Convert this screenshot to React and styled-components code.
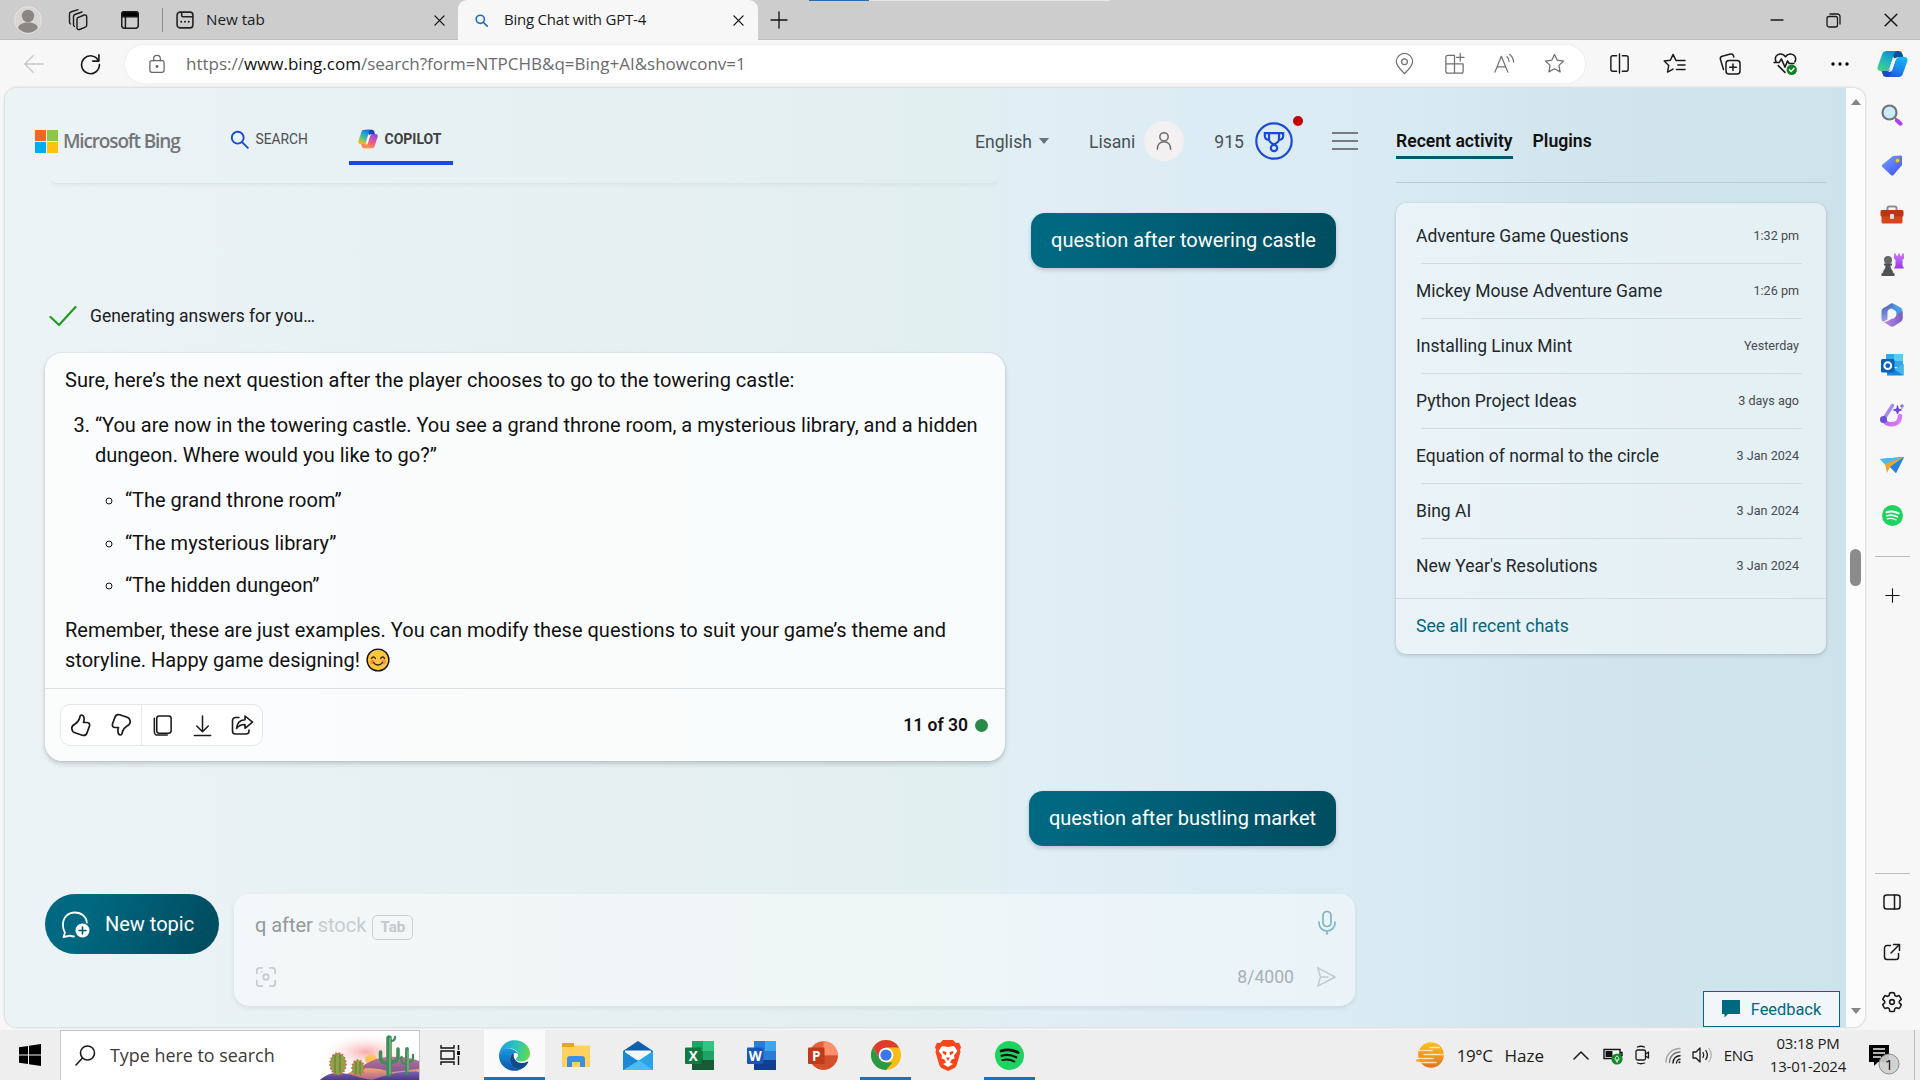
import React from "react";
import styled, { createGlobalStyle, css } from "styled-components";

const UI = `"Open Sans", "Noto Sans", sans-serif`;
const WEB = `Roboto, "Liberation Sans", sans-serif`;

const GlobalStyle = createGlobalStyle`
  * { box-sizing: border-box; }
  html, body { margin: 0; padding: 0; overflow: hidden; }
  body { font-family: ${WEB}; background: #f7f7f7; }
  ul, ol, p { margin: 0; padding: 0; }
  svg { display: block; flex: none; }
`;

const Screen = styled.div`
  width: 1920px;
  height: 1080px;
  display: flex;
  flex-direction: column;
  background: #f7f7f7;
  overflow: hidden;
`;

const Text = styled.span`
  font-family: ${(p) => (p.$ui ? UI : WEB)};
  font-size: ${(p) => p.$size}px;
  font-weight: ${(p) => p.$weight || 400};
  color: ${(p) => p.$color || "#1b1b1b"};
  letter-spacing: ${(p) => p.$ls || 0}px;
  white-space: nowrap;
`;

const Slot = styled.div`
  width: ${(p) => p.$w}px;
  height: 100%;
  flex: none;
  display: flex;
  align-items: center;
  justify-content: center;
`;

/* ---------- window chrome ---------- */

const TabStrip = styled.header`
  position: relative;
  height: 40px;
  flex: none;
  display: flex;
  align-items: center;
  background: #cdcdcd;
  box-shadow: inset 0 -1px 0 #bdbdbd;
`;

const LoadStrip = styled.div`
  position: absolute;
  top: 0;
  left: 809px;
  width: 301px;
  height: 1px;
  background: linear-gradient(90deg, #2a6cab 0 60px, #e8e8e8 60px);
`;

const StripDivider = styled.div`
  width: 1px;
  height: 24px;
  margin: 0 12px 0 2px;
  background: #8c8c8c;
`;

const Tab = styled.div`
  height: 40px;
  width: ${(p) => p.$w}px;
  display: flex;
  align-items: center;
  padding: 0 ${(p) => (p.$active ? "14px 0 17px" : "13px 0 0")};
  border-radius: 9px 9px 0 0;
  background: ${(p) => (p.$active ? "#f7f7f7" : "transparent")};
`;

const TabTitle = styled(Text)`
  flex: 1;
  margin-left: ${(p) => p.$gap}px;
  padding-bottom: 2px;
`;

const WindowButtons = styled.div`
  height: 100%;
  margin-left: auto;
  display: flex;
`;

const Toolbar = styled.div`
  height: 47px;
  flex: none;
  display: flex;
  align-items: center;
`;

const AddressBar = styled.div`
  width: 1460px;
  height: 38px;
  display: flex;
  align-items: center;
  padding-left: 16px;
  border-radius: 19px;
  background: #fff;
  box-shadow: 0 0 3px rgba(0, 0, 0, 0.08);
`;

const Url = styled.div`
  flex: 1;
  margin-left: 13px;
  white-space: nowrap;
`;

/* ---------- page frame ---------- */

const Body = styled.div`
  height: 943px;
  flex: none;
  display: flex;
  padding: 1px 0 3px 5px;
`;

const Frame = styled.main`
  width: 1860px;
  height: 939px;
  display: flex;
  overflow: hidden;
  border-radius: 12px;
  box-shadow: 0 0 3px rgba(0, 0, 0, 0.25);
`;

const Page = styled.div`
  position: relative;
  width: 1841px;
  display: flex;
  background: linear-gradient(90deg, #ecf3f7 0, #e8f1f3 300px, #e6f0f1 650px, #e2efef 930px, #e0eef5 1010px, #daebf3 1340px, #d3e6ee 1540px, #cee2ea 1841px);
`;

const ScrollTrack = styled.div`
  flex: 1;
  display: flex;
  flex-direction: column;
  align-items: center;
  background: #fcfcfc;
`;

const Arrow = styled.div`
  border: 5.5px solid transparent;
  ${(p) =>
    p.$up
      ? css`border-bottom: 6px solid #858585; border-top: 0; margin-top: 11px;`
      : css`border-top: 6px solid #858585; border-bottom: 0; margin: auto 0 13px;`}
`;

const Thumb = styled.div`
  width: 11px;
  height: 37px;
  margin-top: 444px;
  border-radius: 6px;
  background: #8b8b8b;
`;

const Side = styled.aside`
  width: 54px;
  display: flex;
  flex-direction: column;
  align-items: center;
  padding-top: 2px;
`;

const SideItem = styled.div`
  height: 50px;
  display: flex;
  align-items: center;
  justify-content: center;
`;

const SideRule = styled.hr`
  width: 35px;
  height: 1px;
  border: 0;
  margin: ${(p) => p.$m};
  background: #bdbdbd;
`;

/* ---------- conversation ---------- */

const Main = styled.section`
  width: 1391px;
  display: flex;
  flex-direction: column;
`;

const Header = styled.div`
  height: 94px;
  flex: none;
  display: flex;
  align-items: center;
  padding: 12px 38px 0 30px;
`;

const NavItem = styled.div`
  height: 82px;
  width: ${(p) => p.$w}px;
  display: flex;
  align-items: center;
  gap: 7px;
  padding: 0 0 4px ${(p) => p.$pad || 0}px;
  background: ${(p) =>
    p.$active ? "linear-gradient(#174ae4, #174ae4) 0 61px / 104px 4px no-repeat" : "none"};
`;

const Account = styled.div`
  margin-left: auto;
  display: flex;
  align-items: center;
`;

const AccountText = styled(Text)`
  padding-top: 2px;
`;

const Avatar = styled.div`
  width: 40px;
  height: 40px;
  margin-left: 9px;
  display: flex;
  align-items: center;
  justify-content: center;
  border-radius: 50%;
  background: #f2f0f0;
`;

const Rewards = styled.div`
  position: relative;
  margin-left: 11px;
`;

const RedDot = styled.i`
  position: absolute;
  top: -6px;
  right: -10px;
  width: 10px;
  height: 10px;
  border-radius: 50%;
  background: #c50006;
`;

const Burger = styled.div`
  width: 26px;
  height: 18px;
  margin-left: 39px;
  border: solid #767b80;
  border-width: 2px 0;
  display: flex;
  align-items: center;
  &::before { content: ""; width: 100%; height: 2px; background: #767b80; }
`;

const PreviousEdge = styled.div`
  width: 950px;
  height: 8px;
  margin: -6px 0 0 44px;
  border-radius: 0 0 10px 10px;
  border-bottom: 1px solid #dae5e7;
  box-shadow: 0 3px 4px -2px rgba(0, 0, 0, 0.05);
`;

const Bubble = styled.div`
  align-self: flex-end;
  width: ${(p) => p.$w}px;
  height: 55px;
  margin: ${(p) => p.$top}px 60px 0 0;
  padding-bottom: 2px;
  display: flex;
  align-items: center;
  justify-content: center;
  border-radius: 14px;
  background: linear-gradient(115deg, #006880 15%, #004e62 90%);
  box-shadow: 0 2px 4px rgba(0, 0, 0, 0.18);
`;

const Status = styled.div`
  height: 22px;
  display: flex;
  align-items: center;
  gap: 13px;
  margin: 37px 0 0 44px;
`;

const Answer = styled.article`
  width: 960px;
  height: 408px;
  flex: none;
  margin: 26px 0 0 40px;
  display: flex;
  flex-direction: column;
  border-radius: 17px;
  background: rgba(255, 255, 255, 0.78);
  box-shadow: 0 0 2px rgba(0, 0, 0, 0.14), 0 3px 5px rgba(0, 0, 0, 0.17);
`;

const Prose = styled.div`
  height: 335px;
  padding: 12px 20px 0;
  font-size: 20px;
  line-height: 30px;
  color: #111;
  white-space: nowrap;
`;

const Numbered = styled.ol`
  margin: 15px 0 15px;
  padding-left: 30px;
`;

const Choices = styled.ul`
  list-style: circle;
  margin-top: 15px;
  padding-left: 30px;
  li + li { margin-top: 12.7px; }
`;

const InlineEmoji = styled.span`
  display: inline-block;
  vertical-align: -5px;
  margin-left: 1px;
`;

const AnswerFoot = styled.div`
  flex: 1;
  display: flex;
  align-items: center;
  padding: 0 17px 0 15px;
  border-top: 1px solid #dadfe1;
`;

const Actions = styled.div`
  height: 42px;
  display: flex;
  align-items: center;
  border: 1px solid #e4e6e8;
  border-radius: 10px;
  background: #fff;
`;

const ActionSep = styled.div`
  width: 1px;
  height: 100%;
  background: #e4e6e8;
`;

const Counter = styled.div`
  margin-left: auto;
  display: flex;
  align-items: center;
  gap: 7px;
  &::after { content: ""; width: 13px; height: 13px; border-radius: 50%; background: #2b8a47; }
`;

const Composer = styled.div`
  display: flex;
  gap: 15px;
  margin: 48px 0 0 40px;
`;

const NewTopic = styled.button`
  width: 174px;
  height: 60px;
  display: flex;
  align-items: center;
  gap: 15px;
  padding: 0 0 0 16px;
  border: 0;
  border-radius: 30px;
  background: linear-gradient(115deg, #006880 25%, #004e62 88%);
`;

const InputBox = styled.div`
  width: 1121px;
  height: 112px;
  display: flex;
  flex-direction: column;
  justify-content: space-between;
  padding: 16px 18px 18px 21px;
  border-radius: 15px;
  background: rgba(255, 255, 255, 0.42);
  box-shadow: 0 2px 5px rgba(0, 0, 0, 0.08);
`;

const InputLine = styled.div`
  height: ${(p) => p.$h}px;
  display: flex;
  align-items: center;
  gap: ${(p) => p.$gap || 0}px;
`;

const Push = styled.div`
  margin-left: auto;
`;

const MicButton = styled.div`
  margin: -5px 0 0 auto;
`;

const TabKey = styled.kbd`
  width: 41px;
  height: 25px;
  margin-top: 5px;
  display: flex;
  align-items: center;
  justify-content: center;
  border: 1.5px solid #c9d0d1;
  border-radius: 5px;
  font: 700 15px ${WEB};
  color: #c3cacb;
`;

/* ---------- recent activity ---------- */

const Panel = styled.section`
  width: 430px;
  display: flex;
  flex-direction: column;
`;

const PanelTabs = styled.div`
  height: 95px;
  display: flex;
  gap: 20px;
  padding-top: 40px;
  border-bottom: 1px solid #b6cbd3;
`;

const PanelTab = styled.div`
  height: 31px;
  padding-top: 3px;
  border-bottom: ${(p) => (p.$active ? "3px solid #005a70" : "0")};
`;

const ActivityCard = styled.div`
  height: 451px;
  margin-top: 20px;
  border-radius: 10px;
  background: rgba(255, 255, 255, 0.45);
  box-shadow: 0 0 2px rgba(0, 0, 0, 0.12), 0 2px 4px rgba(0, 0, 0, 0.13);
`;

const ActivityList = styled.div`
  height: 396px;
  padding: 6px 24px 0 20px;
  border-bottom: 1px solid #cfdce1;
`;

const ActivityRow = styled.div`
  height: 55px;
  display: flex;
  align-items: center;
  justify-content: space-between;
  padding: 0 3px 2px 0;
  background: ${(p) => (p.$last ? "none" : "linear-gradient(#cfdde3, #cfdde3) 5px 100% / 100% 1px no-repeat")};
`;

const SeeAll = styled.div`
  height: 55px;
  display: flex;
  align-items: center;
  padding: 0 0 1px 20px;
`;

const Feedback = styled.button`
  position: absolute;
  right: 6px;
  bottom: 0;
  width: 137px;
  height: 36px;
  display: flex;
  align-items: center;
  justify-content: center;
  gap: 11px;
  padding: 0;
  border: 1px solid #00687f;
  background: #f1f6f9;
`;

/* ---------- taskbar ---------- */

const Taskbar = styled.footer`
  height: 50px;
  flex: none;
  display: flex;
  align-items: center;
  background: #eeeeee;
`;

const SearchBox = styled.div`
  width: 360px;
  height: 50px;
  display: flex;
  align-items: center;
  padding-left: 14px;
  gap: 14px;
  border: 1px solid #c4c4c4;
  border-bottom: 0;
  background: #fff;
  overflow: hidden;
`;

const SearchHint = styled(Text)`
  padding-bottom: 2px;
`;

const AppTile = styled.div`
  width: ${(p) => p.$w}px;
  height: 50px;
  display: flex;
  align-items: center;
  justify-content: center;
  background: ${(p) => (p.$open ? "#fafafa" : "transparent")};
  box-shadow: ${(p) => (p.$running ? "inset 0 -3px 0 #0b75cf" : "none")};
`;

const Space = styled.div`
  width: ${(p) => p.$w}px;
  flex: none;
`;

const Clock = styled.div`
  width: 94px;
  display: flex;
  flex-direction: column;
  align-items: center;
`;

const ClockLine = styled(Text)`
  line-height: 23px;
`;

const ActionCenter = styled.div`
  margin: 8px 13px 0 14px;
`;

const PeekEdge = styled.div`
  width: 1px;
  height: 50px;
  background: #bcbcbc;
`;

/* ---------- drawings ---------- */

function Line({ w = 24, h, vb = "0 0 24 24", c = "#1a1a1a", sw = 1.5, fill = "none", children }) {
  return (
    <svg width={w} height={h || w} viewBox={vb} fill={fill} stroke={c} strokeWidth={sw} strokeLinecap="round" strokeLinejoin="round">
      {children}
    </svg>
  );
}

const Profile = () => (
  <svg width="28" height="28" viewBox="0 0 28 28">
    <circle cx="14" cy="14" r="13.3" fill="#d8d6d3" stroke="#e6e4e0" />
    <circle cx="14" cy="10" r="6.2" fill="#8a8782" />
    <path d="M4 22c1-4 5-5.500 10-5.500S23 18 24 22a13 13 0 0 1-20 0z" fill="#8a8782" />
  </svg>
);
const Workspaces = () => (
  <Line w={24} sw={1.4}>
    <path d="M12.500 9.300 18.200 7a1.800 1.800 0 0 1 2.500 1.700v8.600a2 2 0 0 1-1.300 1.900L13.500 21.500a1.800 1.800 0 0 1-2.500-1.700v-8.600a2 2 0 0 1 1.500-1.900z" />
    <path d="M8.500 18.500a2 2 0 0 1-1-1.700V8.300A2 2 0 0 1 8.800 6.500L16 4M4.500 16a2 2 0 0 1-1-1.700V5.800A2 2 0 0 1 4.800 4L12 1.700" />
  </Line>
);
const TabActions = () => (
  <Line w={22} sw={1.6}>
    <rect x="3" y="3" width="18" height="18" rx="3" />
    <path d="M3 6a3 3 0 0 1 3-3h12a3 3 0 0 1 3 3v2.500H3z" fill="#000" />
    <path d="M7 9v12" />
  </Line>
);
const NewTabIcon = () => (
  <Line w={20} sw={1.9} c="#222">
    <rect x="2.500" y="2.500" width="19" height="19" rx="3.500" />
    <path d="M8 3v3.500a1.500 1.500 0 0 0 1.500 1.500H21" />
    <path d="M7.500 14h.01M12 14h.01M16.500 14h.01" strokeWidth="2.400" />
  </Line>
);
const X = ({ s = 11, sw = 1.4 }) => (
  <Line w={s} vb="0 0 12 12" sw={sw} c="#111"><path d="M1 1l10 10M11 1 1 11" /></Line>
);
const Plus = ({ s = 18, c = "#111", sw = 1.3 }) => (
  <Line w={s} vb="0 0 18 18" sw={sw} c={c}><path d="M9 1v16M1 9h16" /></Line>
);
const Glass = ({ s = 16, c = "#1a6fc4", sw = 2 }) => (
  <Line w={s} vb="0 0 16 16" sw={sw} c={c}><circle cx="6.500" cy="6.500" r="5" /><path d="M10.200 10.200 15 15" /></Line>
);
const TaskGlass = () => (
  <Line w={21} vb="0 0 21 21" sw={1.6} c="#1b1b1b"><circle cx="12.500" cy="8" r="7" /><path d="M7.500 13 1 20" /></Line>
);
const Back = () => <Line w={22} c="#c8c8c8" sw={1.4}><path d="M22 12H2.500M11 3 2 12l9 9" /></Line>;
const Reload = () => (
  <Line w={23} sw={1.7}><path d="M20.500 9.500A9.300 9.300 0 1 0 21.300 13M20.800 3v6.500h-6.500" /></Line>
);
const Lock = () => (
  <Line w={20} c="#666"><rect x="3.500" y="8" width="17" height="14" rx="2.500" /><path d="M8 8V5.500a4 4 0 0 1 8 0V8" /><circle cx="12" cy="15" r="1" fill="#666" /></Line>
);
const Pin = () => (
  <Line w={23} c="#6f6f6f" sw={1.3}><path d="M12 22.500c4-3.800 8.500-7.800 8.500-12.500a8.500 8.500 0 0 0-17 0c0 4.700 4.500 8.700 8.500 12.500z" /><circle cx="12" cy="10.200" r="3" /></Line>
);
const Grid = () => (
  <Line w={23} c="#6f6f6f" sw={1.3}><path d="M12 3.500H5a2 2 0 0 0-2 2V20a2 2 0 0 0 2 2h14a2 2 0 0 0 2-2v-7.500H3M12 3.500V22M18 1.500v8M14 5.500h8" /></Line>
);
const ReadAloud = () => (
  <Line w={23} c="#6f6f6f" sw={1.3}><path d="M2 21 8.700 4.500 15.500 21M4.300 15.500h9M14.500 5c1.500 1.200 2.200 2.700 2.300 4.800M17.500 2.500c2.500 2 3.800 4.600 4 8" /></Line>
);
const starPath = "M12 2.500l2.900 6.100 6.600.8-4.900 4.600 1.300 6.700L12 17.400l-5.900 3.300 1.300-6.700L2.500 9.400l6.600-.8z";
const Star = () => <Line w={23} c="#6f6f6f" sw={1.3}><path d={starPath} /></Line>;
const Split = () => (
  <Line w={23}><path d="M9 4H5a2 2 0 0 0-2 2v12a2 2 0 0 0 2 2h4M15 4h4a2 2 0 0 1 2 2v12a2 2 0 0 1-2 2h-4M12 2v20" /></Line>
);
const Favorites = () => (
  <Line w={23}><path d="M16 8.800h-2.500L10.500 2.500 7.700 8.600 1.200 9.400 6 14l-1.300 7 5.800-3.200M14 8.800h9M15.500 13.500H23M14 18.200h9" /></Line>
);
const Collections = () => (
  <Line w={24}><rect x="8" y="8.500" width="14" height="13.500" rx="3" /><path d="M15 12v6.500M11.700 15.200h6.600M5.500 17.500 2.400 7.300a2.500 2.500 0 0 1 1.800-3L12.500 2a2.500 2.500 0 0 1 3 1.800l.3 1.200" /></Line>
);
const Heart = () => (
  <Line w={25}>
    <path d="M3 10.500C.8 6 4 2.800 7 2.800c2.200 0 3.800 1 5 2.700 1.200-1.700 2.800-2.700 5-2.700 3 0 6.200 3.200 4 7.700M1 11h5l2-3.500 3.500 8L14 9.500l1.500 2.500H20M5 14l6.500 6.500" />
    <circle cx="18" cy="18" r="5" fill="#128025" stroke="none" /><path d="M15.800 18l1.600 1.600 2.800-3" stroke="#fff" strokeWidth="1.300" />
  </Line>
);
const Dots = () => (
  <svg width="18" height="4" viewBox="0 0 18 4"><circle cx="2" cy="2" r="1.700" /><circle cx="9" cy="2" r="1.700" /><circle cx="16" cy="2" r="1.700" /></svg>
);

function CopilotMark({ s, h, warm }) {
  const id = warm ? "cw" : "cc";
  const a = warm ? ["#1a6fe0", "#2cb5c8", "#f5c400"] : ["#0f86d6", "#1fb2c0", "#45d08c"];
  const b = warm ? ["#8a50e8", "#f0588a", "#ff9a40"] : ["#1bb4f0", "#1a86f0", "#1560d8"];
  return (
    <svg width={s} height={h || s} viewBox="0 0 30 30" preserveAspectRatio="none">
      <defs>
        <linearGradient id={id + "a"} x1=".7" y1="0" x2=".2" y2="1"><stop offset="0" stopColor={a[0]} /><stop offset=".45" stopColor={a[1]} /><stop offset="1" stopColor={a[2]} /></linearGradient>
        <linearGradient id={id + "b"} x1=".6" y1="0" x2=".3" y2="1"><stop offset="0" stopColor={b[0]} /><stop offset=".55" stopColor={b[1]} /><stop offset="1" stopColor={b[2]} /></linearGradient>
      </defs>
      <path d="M13 1h8c2 0 3 1.200 3.500 3l1 3.500H21c-2 0-3.200 1-3.800 3z" fill={warm ? "#1645b8" : "#0c4f9c"} />
      <path d="M17 29H9c-2 0-3-1.200-3.500-3l-1-3.500H9c2 0 3.200-1 3.800-3z" fill={warm ? "#ff8a4c" : "#1a48c8"} />
      <path d="M9.500 1H20c-2 0-3 1.500-3.600 3.500L12 19.500c-.7 2.200-1.800 3-4 3H3.500C.8 22.500 0 20.500.6 18L5 4.500C5.800 2 7 1 9.500 1z" fill={`url(#${id}a)`} />
      <path d="M20.500 29H10c2 0 3-1.500 3.600-3.500L18 10.500c.7-2.200 1.800-3 4-3h4.500c2.700 0 3.500 2 2.900 4.500L25 25.500c-.8 2.500-2 3.500-4.500 3.500z" fill={`url(#${id}b)`} />
      <path d="M17 8.500h3c-1.500.8-2 1.700-2.500 3.400l-3 9.600c-.5 1.500-1.300 2-3 2h-1c1.300-.8 1.600-1.700 2-3l3-9.500c.3-1.200.7-2 1.500-2.500z" fill="#f4f8fb" opacity={warm ? 0.85 : 0.95} />
    </svg>
  );
}

const MsLogo = () => (
  <svg width="23" height="23" viewBox="0 0 23 23">
    <path fill="#f26522" d="M0 0h11v11H0z" /><path fill="#8dc63f" d="M12 0h11v11H12z" /><path fill="#00aeef" d="M0 12h11v11H0z" /><path fill="#ffc20e" d="M12 12h11v11H12z" />
  </svg>
);
const Trophy = () => (
  <svg width="38" height="38" viewBox="0 0 38 38" fill="none" stroke="#1b4bd6" strokeWidth="2.200">
    <circle cx="19" cy="19" r="17.700" />
    <path d="M14 11.200h10v6.300c0 2.200-2 3.500-5 5.200-3-1.700-5-3-5-5.200zM14 11.200H9.800v2.600c0 2.600 1.700 4 4.400 4.400M24 11.200h4.200v2.600c0 2.600-1.700 4-4.400 4.400" />
    <circle cx="19" cy="26" r="3.200" />
  </svg>
);
const Person = () => (
  <Line w={20} c="#6d6d6d" sw={1.8}><circle cx="12" cy="7" r="5" /><path d="M4 22c0-5.500 3.200-9 8-9s8 3.500 8 9" /></Line>
);
const Check = () => <Line w={28} h={22} vb="0 0 28 22" c="#1f9e22" sw={2.2}><path d="M1.500 12 10 20 26.500 2" /></Line>;
const Smile = () => (
  <svg width="24" height="24" viewBox="0 0 24 24">
    <circle cx="12" cy="12" r="10.900" fill="#fdc63c" stroke="#111" strokeWidth="1.400" />
    <circle cx="6.500" cy="14" r="2.300" fill="#f58a4c" /><circle cx="17.500" cy="14" r="2.300" fill="#f58a4c" />
    <path d="M5.500 10.500c.8-2 3-2 3.800 0M14.700 10.500c.8-2 3-2 3.800 0M7.500 14.500c2 3.300 7 3.300 9 0" fill="none" stroke="#3b2510" strokeWidth="1.400" strokeLinecap="round" />
  </svg>
);
const thumb = "M12.500 2c-.9 0-1.300.6-1.500 1.500-.5 3-2 5.500-5 7.500-2 1.200-3.500 2.500-3.200 4.500.2 2 .8 3.500 3 4.200l7.500 2.500c2.200.7 4-.3 4.700-2.300L20.500 13c.5-2-.5-3.500-2.500-3.500h-3.500C15.500 7 15.500 2 12.500 2z";
const ThumbUp = () => <Line w={24} c="#1a1a1a" sw={1.7}><path d={thumb} /></Line>;
const ThumbDown = () => <Line w={24} c="#1a1a1a" sw={1.7}><path d={thumb} transform="rotate(180 12 12)" /></Line>;
const Copy = () => (
  <Line w={23} sw={1.6}><rect x="6" y="2" width="15" height="18" rx="2.500" /><path d="M3.500 4.500v14A3.500 3.500 0 0 0 7 22h10" /></Line>
);
const Download = () => <Line w={23} sw={1.6}><path d="M12 2v16M6 12.500l6 6 6-6M3.500 22.500h17" /></Line>;
const Share = () => (
  <Line w={24} sw={1.6}><path d="M9 4.500H5.500a3 3 0 0 0-3 3V18a3 3 0 0 0 3 3H16a3 3 0 0 0 3-3v-1" /><path d="M15 3v3.800c-5 .3-8 3-8.500 8.700 2-3 4.500-4 8.500-4v3.800l7.500-6.200z" /></Line>
);
const TopicIcon = () => (
  <Line w={29} c="#fff" sw={1.8} vb="0 0 29 29">
    <path d="M13 26.500c-1.500 0-2.800-.3-4-.8L2.500 27l1.500-4.500C2.500 20.500 2 18 2 14 2 7.500 7 2.500 13.800 2.500S25.600 7 25.800 12.500" />
    <circle cx="21.500" cy="20.500" r="7" fill="#fff" stroke="none" /><path d="M21.500 17v7M18 20.500h7" stroke="#005a70" strokeWidth="1.600" />
  </Line>
);
const Lens = () => (
  <Line w={22} c="#c6cfd1" sw={2}>
    <path d="M2 8V5a3 3 0 0 1 3-3h3M16 2h3a3 3 0 0 1 3 3v3M22 16v3a3 3 0 0 1-3 3h-3M8 22H5a3 3 0 0 1-3-3v-3" /><circle cx="12" cy="12" r="3" /><path d="M7 6.500h.01" />
  </Line>
);
const Mic = () => (
  <Line w={20} h={25} vb="0 0 20 25" c="#80b4c0" sw={1.7}><rect x="6" y="1.500" width="8" height="15" rx="4" /><path d="M2 12v1a8 8 0 0 0 16 0v-1M10 21v3" /></Line>
);
const Send = () => <Line w={22} c="#bfcad1" sw={1.6}><path d="M3 2l19 10L3 22l3-10zM6 12h8" /></Line>;
const Speech = () => <svg width="18" height="18" viewBox="0 0 18 18"><path d="M0 0h18v14H6l-3.500 3.500V14H0z" fill="#00687f" /></svg>;

/* sidebar */
const SideSearch = () => (
  <svg width="22" height="22" viewBox="0 0 22 22"><path d="M14 14l2.500 2.500" stroke="#777" strokeWidth="2" /><path d="M16 16.500l3.500 3.200" stroke="#b03ff2" strokeWidth="4" strokeLinecap="round" /><circle cx="8.500" cy="8.500" r="7" fill="#cdeafa" stroke="#70757a" strokeWidth="2.200" /></svg>
);
const Tag = () => (
  <svg width="22" height="22" viewBox="0 0 22 22">
    <defs><linearGradient id="tg" x2=".8" y2="1"><stop stopColor="#77a2ff" /><stop offset="1" stopColor="#4257ee" /></linearGradient></defs>
    <path d="M12 2l7.500-.5c1 0 1.500.5 1.500 1.500v8L12.500 21c-.8.8-1.800.8-2.600 0L1.500 13c-.8-.8-.8-1.700 0-2.500z" fill="url(#tg)" /><circle cx="16.500" cy="6.500" r="2.200" fill="#f0d04e" stroke="#a88638" />
  </svg>
);
const Toolbox = () => (
  <svg width="24" height="20" viewBox="0 0 24 20">
    <path d="M7.500 5V3c0-1 .5-1.500 1.500-1.500h6c1 0 1.500.5 1.500 1.500v2" fill="none" stroke="#8b9095" strokeWidth="2" />
    <rect x="1.500" y="10" width="21" height="8.500" rx="1.500" fill="#d4471a" /><rect x=".5" y="5" width="23" height="6.500" rx="1.500" fill="#b8390f" /><rect x="10" y="9" width="4" height="5" rx="1" fill="#d9dce0" />
  </svg>
);
const Chess = () => (
  <svg width="24" height="24" viewBox="0 0 24 24">
    <defs><linearGradient id="ch" x2="0" y2="1"><stop stopColor="#d07af5" /><stop offset="1" stopColor="#9838e8" /></linearGradient></defs>
    <path d="M14 .5h2v2h2v-2h2v2h2v-2h2v5l-1.500 1.500v5.500l1.500 3H14l1.500-3V7L14 5.500z" fill="url(#ch)" />
    <circle cx="8" cy="7" r="4" fill="#65696c" /><path d="M4 10.500h8v2h-1.500c0 2.500.8 4 2.300 5.500v1.500l1.700 1V23H1.500v-2.500l1.700-1V18c1.500-1.500 2.300-3 2.300-5.500H4z" fill="#4e5254" />
  </svg>
);
const M365 = () => (
  <svg width="22" height="24" viewBox="0 0 22 24">
    <defs>
      <linearGradient id="m1" x1="1" x2="0" y2="1"><stop stopColor="#55b4f0" /><stop offset="1" stopColor="#2b6fc8" /></linearGradient>
      <linearGradient id="m2" x2=".3" y2="1"><stop stopColor="#3d58b8" /><stop offset="1" stopColor="#9aa4ee" /></linearGradient>
      <linearGradient id="m3" x2="1"><stop stopColor="#c08ae0" /><stop offset="1" stopColor="#7a5cc4" /></linearGradient>
    </defs>
    <path d="M9 1c1.500-.9 2.800-.9 4.200 0l6.300 3.500c1.300.8 2 2 2 3.500v8l-6-3v-2.500c0-1.500-.7-2.500-2-3.200L6.500 3z" fill="url(#m1)" />
    <path d="M11 .4 2.500 5C1.200 5.800.5 7 .5 8.500v7c0 1.500.8 2.500 2 3.300l4-2.300V9.700c0-1.500.7-2.700 2-3.400L13 4z" fill="url(#m2)" />
    <path d="M21.500 15.500c0 1.500-.7 2.600-2 3.400L13.200 23c-1.500.9-2.800.9-4.400 0l-6.300-4.200c1.300.5 2.500.2 3.700-.5l8-4.600c.9-.5 1.300-1.200 1.300-2.200l6-3z" fill="url(#m3)" />
    <circle cx="11" cy="12" r="3.700" fill="#f7f7f7" />
  </svg>
);
const Outlook = () => (
  <svg width="23" height="22" viewBox="0 0 23 22">
    <rect x="5" y="0" width="17" height="13" rx="1" fill="#34a7e8" /><path d="M13 0h9v7h-9z" fill="#5fc8f4" /><path d="M6 10l9 5 7.500-5v11.500H6z" fill="#1c86d4" /><path d="M22.500 10v11.500L13 15z" fill="#42b8f0" />
    <rect x="0" y="5" width="13.500" height="13.500" rx="1.500" fill="#0a62b8" /><circle cx="6.800" cy="11.700" r="3.400" fill="none" stroke="#fff" strokeWidth="2" />
  </svg>
);
const Designer = () => (
  <svg width="24" height="24" viewBox="0 0 24 24" fill="none" strokeLinecap="round">
    <defs><linearGradient id="ds" x1="0" x2="1"><stop stopColor="#c46cf0" /><stop offset="1" stopColor="#d87cf8" /></linearGradient></defs>
    <path d="M4 16.500c1 6.500 16 7.500 16-3.500" stroke="url(#ds)" strokeWidth="4.500" /><path d="M12.500 2.500 5 14" stroke="#a58af0" strokeWidth="3.500" /><circle cx="3.500" cy="16.500" r="3.500" fill="#6b4fd8" />
    <path d="M17.500 3l1 3 3 1-3 1-1 3-1-3-3-1 3-1z" fill="#6d40dc" stroke="#6d40dc" /><path d="M22 1.500v4M20.500 3h3" stroke="#6d40dc" />
  </svg>
);
const Plane = () => (
  <svg width="24" height="18" viewBox="0 0 24 18"><path d="M0 3 24 1 16 17 11 12z" fill="#2f8fe4" /><path d="M0 3 24 1 8 12z" fill="#4cbaf0" /><path d="M5 8 24 1 10 11l-3 6z" fill="#f0a52a" /><path d="M24 1 10 11l6 6z" fill="#2784dc" /></svg>
);
function Spotify({ s, mark }) {
  return (
    <svg width={s} height={s} viewBox="0 0 24 24" fill="none" stroke={mark} strokeLinecap="round">
      <circle cx="12" cy="12" r="12" fill="#1ed35f" stroke="none" />
      <path d="M5 8.300c4.500-1.500 10-1 14.200 1.300" strokeWidth="2.200" /><path d="M5.500 12.200c4-1.200 8.500-.7 12 1.300" strokeWidth="1.900" /><path d="M6 15.800c3.500-1 7-.5 10 1.200" strokeWidth="1.600" />
    </svg>
  );
}
const PanelIcon = () => <Line w={18} vb="0 0 18 18"><rect x="1" y="2" width="16" height="14" rx="2.500" /><path d="M11.500 2v14" /></Line>;
const OpenOut = () => <Line w={18} vb="0 0 18 18"><path d="M7.500 2.500H4A2.500 2.500 0 0 0 1.500 5v9A2.500 2.500 0 0 0 4 16.500h9a2.500 2.500 0 0 0 2.500-2.500v-3.500M10.500 1.500h6v6M16.500 1.500 8 10" /></Line>;
const Gear = () => (
  <Line w={22} sw={1.7}>
    <path d="M12 1.800c.9 0 1.700.1 2.500.3l.6 2.800 1.700 1 2.800-.9c1.200 1.200 2 2.600 2.500 4.200l-2.100 1.900v1.900l2.100 1.900a10 10 0 0 1-2.500 4.200l-2.800-.9-1.700 1-.6 2.800a10.500 10.500 0 0 1-5 0l-.6-2.800-1.700-1-2.800.9a10 10 0 0 1-2.500-4.200L4 13v-1.900L1.900 9.200A10 10 0 0 1 4.400 5l2.800.9 1.700-1 .6-2.800c.8-.2 1.600-.3 2.500-.3z" /><circle cx="12" cy="12" r="2.600" />
  </Line>
);

/* taskbar */
const Windows = () => <svg width="22" height="22" viewBox="0 0 22 22"><path d="M0 3.200 9 2v8.500H0zM10 1.800 22 0v10.500H10zM0 11.500h9V20L0 18.800zM10 11.500h12V22l-12-1.800z" /></svg>;
const Desert = () => (
  <svg width="99" height="49" viewBox="0 0 99 49">
    <defs>
      <radialGradient id="glow"><stop stopColor="#f9a9ac" /><stop offset="1" stopColor="#fff" stopOpacity="0" /></radialGradient>
      <linearGradient id="hill" x2="0" y2="1"><stop stopColor="#c0748c" /><stop offset="1" stopColor="#5f4a9c" /></linearGradient>
      <linearGradient id="sand" x2="0" y2="1"><stop stopColor="#f4a878" /><stop offset="1" stopColor="#a8608c" /></linearGradient>
      <linearGradient id="front" x2="0" y2="1"><stop stopColor="#7a62b4" /><stop offset="1" stopColor="#4b3a86" /></linearGradient>
    </defs>
    <ellipse cx="46" cy="21" rx="46" ry="19" fill="url(#glow)" />
    <circle cx="51" cy="29" r="5.800" fill="#ffc35a" />
    <path d="M38 40c8-10 22-15 38-14 12 0 17 2 23 4v19H38z" fill="url(#hill)" /><path d="M26 44c10-9 30-8 46-3l27-3v11H26z" fill="url(#sand)" />
    <path d="M0 49c8-8 18-8 28-6 9 2 14 5 26 6zM52 49c14-5 30-10 47-8v8z" fill="url(#front)" />
    <g fill="#8fa24a" stroke="#e0585a" strokeWidth="1.700" strokeDasharray="1.500 2"><ellipse cx="18" cy="33" rx="8" ry="11" /><ellipse cx="38" cy="37" rx="6" ry="8" /></g>
    <path d="M15 24v18M20 24v18M36 31v12M40 31v12" stroke="#5f8038" strokeWidth="1.200" />
    <g fill="none" stroke="#3f8c5a" strokeLinecap="round"><path d="M69 7v36" strokeWidth="5.500" /><path d="M60.500 21v5q0 6 7 6M78 18v7q0 6-7 6" strokeWidth="3.600" /><path d="M87 18v24" strokeWidth="3.800" /><path d="M81.500 26v3q0 4 5 4M93 24v3q0 4-5 4M71 10q4 0 4-4" strokeWidth="2.300" /></g>
    <path d="M70 7v36M88 19v22" stroke="#7cc084" strokeWidth="1.200" />
  </svg>
);
const TaskView = () => <svg width="21" height="22" viewBox="0 0 21 22" fill="none" stroke="#111" strokeWidth="1.400"><path d="M1 1v3h13V1M1 21v-3h13v3M1 7h13v8H1zM18.500 1v5M18.500 12v9" /><path d="M17 7h3v4h-3z" fill="#111" stroke="none" /></svg>;
const Edge = () => (
  <svg width="31" height="31" viewBox="0 0 31 31">
    <defs>
      <linearGradient id="e1" x1="0" y1=".2" x2="1" y2=".4"><stop stopColor="#1c9fe0" /><stop offset=".6" stopColor="#2fc6b4" /><stop offset="1" stopColor="#63d94e" /></linearGradient>
      <linearGradient id="e2" x2="0" y2="1"><stop stopColor="#1a98e0" /><stop offset="1" stopColor="#0d55ae" /></linearGradient>
    </defs>
    <path d="M0 15.500C.5 6.500 7 .3 15.500.3 24.500.3 31 6.500 31 13.500c0 5-4 8-8.500 8-4 0-5.500-1.300-5.500-2.500 0-1 2-1.800 2-4.500C19 11 15.500 8.500 11 8.500 5.500 8.500 1.500 11 0 15.500z" fill="url(#e1)" />
    <path d="M0 15.500C.5 11.500 4.500 8.500 9 8.500c5.500 0 9 2.500 10 5.500-3-2.500-8 .5-8 5.500s4.500 10 11 10c-2 1-4 1.300-6.500 1.300C6.500 30.800 0 24 0 15.500z" fill="url(#e2)" />
    <path d="M11 19.500c0-3 1.500-5.500 4-6.200-1.500 5.200 2.500 9.700 7.500 9.700 3 0 5-1 6-1.500.6-.3 1 .2.700.8-1.500 3-4 5.700-7.500 7-6 .7-10.700-4-10.700-9.800z" fill="#114a8b" />
  </svg>
);
const Folder = () => (
  <svg width="28" height="24" viewBox="0 0 28 24"><path d="M1 0h9l3 3.500H1z" fill="#dda222" /><path d="M0 2.500h28V24H0z" fill="#ffd25f" /><path d="M0 0h12v4H0z" fill="#e5a620" /><path d="M5 24v-8c0-2 1-3 3-3h12c2 0 3 1 3 3v8h-5v-5h-8v5z" fill="#3f90dc" /></svg>
);
const Mail = () => (
  <svg width="30" height="29" viewBox="0 0 30 29"><path d="M15 0l15 10v5H0v-5z" fill="#0f5fae" /><path d="M2 9.500h26V20H2z" fill="#f4f8fb" /><path d="M0 10l15 10L30 10v19H0z" fill="#2ba4e6" /><path d="M0 29l15-10.500L30 29z" fill="#47bdf2" /><path d="M0 10l15 10L0 29z" fill="#1d87d6" /></svg>
);
const docText = { fontFamily: "Open Sans, sans-serif", fontWeight: 700 };
function Office({ letter, c }) {
  return (
    <svg width="29" height="29" viewBox="0 0 29 29">
      <path d="M7 0h22v29H7z" fill={c[0]} /><path d="M18 0h11v10H18z" fill={c[1]} /><path d="M7 10h11v9H7z" fill={c[2]} /><path d="M7 19h22v10H7z" fill={c[3]} /><path d="M18 10h11v9H18z" fill={c[0]} />
      <rect y="6.500" width="16.500" height="16.500" rx="1" fill={c[4]} />
      <text x="8.200" y="20" fontSize="13.500" textAnchor="middle" fill="#fff" style={docText}>{letter}</text>
    </svg>
  );
}
const PowerPoint = () => (
  <svg width="30" height="29" viewBox="0 0 30 29">
    <circle cx="15.500" cy="14.500" r="14.300" fill="#e2613c" /><path d="M15.500.2A14.300 14.300 0 0 1 29.800 14.500H15.500z" fill="#ff8f6b" /><path d="M1.200 14.500h28.600a14.300 14.300 0 0 1-28.600 0z" fill="#d4502c" />
    <rect y="6.500" width="16.500" height="16.500" rx="1" fill="#c13b1b" /><text x="8.200" y="20" fontSize="13.500" textAnchor="middle" fill="#fff" style={docText}>P</text>
  </svg>
);
const Chrome = () => (
  <svg width="30" height="30" viewBox="0 0 30 30"><circle cx="15" cy="15" r="15" fill="#fbbd14" /><path d="M15 0A15 15 0 0 1 28 7.500H15L8.500 18.700 2 7.500A15 15 0 0 1 15 0z" fill="#df3a2f" /><path d="M2 7.500l6.500 11.200L15 22.500h6.500L15 30A15 15 0 0 1 2 7.500z" fill="#2b9a48" /><circle cx="15" cy="15" r="7.300" fill="#fff" /><circle cx="15" cy="15" r="5.600" fill="#3b78e7" /></svg>
);
const Brave = () => (
  <svg width="26" height="31" viewBox="0 0 26 31"><path d="M8 0h10l3 3 3-.3L26 7l-1 3 .5 2-4 13.500c-.3 1-1 1.800-2 2.400L13 31l-6.500-3.100c-1-.6-1.700-1.400-2-2.400L.5 12 1 10 0 7l2-4.300L5 3z" fill="#f9461c" /><path d="M7 6l6 1 6-1 3.500 5-3.500 4.500.5 3-3 1-1.500 3L18 24l-5 3-5-3 3-1.500-1.500-3-3-1 .5-3L3.500 11z" fill="#fff" /><path d="M8 11l3.500 1-.5 3.500L7.500 13zM18 11l-3.500 1 .5 3.500L18.500 13zM11 17.500h4L13 21z" fill="#f9461c" /></svg>
);
const Haze = () => (
  <svg width="28" height="28" viewBox="0 0 28 28"><defs><linearGradient id="hz" x2="0" y2="1"><stop stopColor="#ffc21c" /><stop offset="1" stopColor="#e8701a" /></linearGradient></defs><circle cx="15" cy="14" r="12.800" fill="url(#hz)" /><path d="M1 9.500h15M8 13.500h19M3 17.500h14M0 21.500h20M14 6.500h9" stroke="#fbe3bd" strokeWidth="1.700" strokeLinecap="round" /><path d="M3 11.500h9M1 19.500h8" stroke="#f29a2a" strokeWidth="2" strokeLinecap="round" /></svg>
);
const Chevron = () => <Line w={16} h={9} vb="0 0 16 9" sw={1.5}><path d="M1 8l7-7 7 7" /></Line>;
const Battery = () => (
  <svg width="20" height="20" viewBox="0 0 20 20"><path d="M1 4.500h16v9H1zM17 7.500h2v3h-2" fill="#fff" stroke="#111" strokeWidth="1.400" /><path d="M2.500 6h7v6h-7z" fill="#111" /><circle cx="14" cy="14" r="5.600" fill="#128a26" /><path d="M14 10.800c2.500 2 2.500 4.300 0 5.400-2.500-1.100-2.500-3.400 0-5.400zM14 14v3.500" fill="none" stroke="#fff" strokeWidth="1" /></svg>
);
const Cam = () => <Line w={18} h={20} vb="0 0 18 20" sw={1.3}><rect x="2" y="5" width="9.500" height="10" rx="1.500" /><path d="M11.500 9l3-2v6l-3-2M3.500 2q3.500-1.500 7 0M3.500 18q3.500 1.500 7 0" /></Line>;
const Wifi = () => (
  <Line w={17} vb="0 0 17 17" sw={1.4}><path d="M1 15C1 7.500 7 1.500 15 1.500" stroke="#a4a4a4" /><path d="M4.500 15.500C4.500 9.500 9 5 15 5" stroke="#777" /><path d="M8 16c0-4 3-7.300 7-7.300M11.500 16c0-2 1.500-3.700 3.500-3.700" /><circle cx="14.500" cy="15.300" r="1" fill="#111" stroke="none" /></Line>
);
const Volume = () => <Line w={21} h={18} vb="0 0 21 18" sw={1.3}><path d="M1 6h3l4-4v14l-4-4H1zM11 6.500q1.500 2.500 0 5M13.800 4.500q3 4.500 0 9" /><path d="M17 2.500q4.500 6.500 0 13" stroke="#b0b0b0" /></Line>;
const Notifications = () => (
  <svg width="32" height="34" viewBox="0 0 32 34"><path d="M0 3h20v17H9l-4 4v-4H0z" fill="#000" /><path d="M4 7h12M4 11h12M4 15h8" stroke="#eee" strokeWidth="1.300" /><circle cx="20" cy="22" r="10" fill="#cfcfcf" fillOpacity=".92" stroke="#8c8c8c" /><text x="20" y="27.500" textAnchor="middle" fontSize="15" fontFamily="Open Sans, sans-serif" fill="#111">1</text></svg>
);

const activity = [
  ["Adventure Game Questions", "1:32 pm"],
  ["Mickey Mouse Adventure Game", "1:26 pm"],
  ["Installing Linux Mint", "Yesterday"],
  ["Python Project Ideas", "3 days ago"],
  ["Equation of normal to the circle", "3 Jan 2024"],
  ["Bing AI", "3 Jan 2024"],
  ["New Year's Resolutions", "3 Jan 2024"],
];

const sideApps = [SideSearch, Tag, Toolbox, Chess, M365, Outlook, Designer, Plane];

export default function App() {
  return (
    <Screen>
      <GlobalStyle />
      <TabStrip>
        <LoadStrip />
        <Slot $w={56}><Profile /></Slot>
        <Slot $w={43}><Workspaces /></Slot>
        <Slot $w={61}><TabActions /></Slot>
        <StripDivider />
        <Tab $w={283}>
          <NewTabIcon />
          <TabTitle $ui $size={15.2} $gap={11} $ls={0}>New tab</TabTitle>
          <X />
        </Tab>
        <Tab $w={300} $active>
          <Glass s={13} />
          <TabTitle $ui $size={15} $gap={16} $ls={-0.22}>Bing Chat with GPT-4</TabTitle>
          <X />
        </Tab>
        <Slot $w={42}><Plus /></Slot>
        <WindowButtons>
          <Slot $w={57}><Line w={14} h={2} vb="0 0 14 2" sw={1.3}><path d="M1 1h12" /></Line></Slot>
          <Slot $w={57}><Line w={15} vb="0 0 15 15" sw={1.3}><rect x="1" y="3.500" width="10.500" height="10.500" rx="2" /><path d="M4 1h7.500A2.500 2.500 0 0 1 14 3.500V11" /></Line></Slot>
          <Slot $w={58}><X s={14} sw={1.2} /></Slot>
        </WindowButtons>
      </TabStrip>

      <Toolbar>
        <Slot $w={68}><Back /></Slot>
        <Slot $w={44}><Reload /></Slot>
        <Space $w={13} />
        <AddressBar>
          <Slot $w={32}><Lock /></Slot>
          <Url>
            <Text $ui $size={17} $color="#6b6b6b">https://</Text>
            <Text $ui $size={17} $color="#111">www.bing.com</Text>
            <Text $ui $size={17} $color="#6b6b6b">/search?form=NTPCHB&amp;q=Bing+AI&amp;showconv=1</Text>
          </Url>
          <Slot $w={50}><Pin /></Slot>
          <Slot $w={50}><Grid /></Slot>
          <Slot $w={50}><ReadAloud /></Slot>
          <Slot $w={50}><Star /></Slot>
          <Space $w={6} />
        </AddressBar>
        <Space $w={7} />
        <Slot $w={55}><Split /></Slot>
        <Slot $w={55}><Favorites /></Slot>
        <Slot $w={55}><Collections /></Slot>
        <Slot $w={56}><Heart /></Slot>
        <Slot $w={54}><Dots /></Slot>
        <Slot $w={51}><CopilotMark s={31} h={28} /></Slot>
      </Toolbar>

      <Body>
        <Frame>
          <Page>
            <Main>
              <Header>
                <MsLogo />
                <Space $w={5} />
                <Text $ui $size={19} $weight={600} $color="#737678" $ls={-1.15}>Microsoft Bing</Text>
                <Space $w={50} />
                <NavItem $w={119}>
                  <Glass s={19} c="#1b4bd6" sw={1.6} />
                  <Text $size={13.8} $color="#4a4f52">SEARCH</Text>
                </NavItem>
                <NavItem $w={104} $pad={9} $active>
                  <CopilotMark s={20} warm />
                  <Text $size={14} $weight={700} $color="#3c4043">COPILOT</Text>
                </NavItem>
                <Account>
                  <AccountText $size={17.6} $color="#4a5053">English</AccountText>
                  <Space $w={7} />
                  <svg width="10" height="6" viewBox="0 0 10 6"><path d="M0 0h10L5 6z" fill="#6c7174" /></svg>
                  <Space $w={40} />
                  <AccountText $size={17.6} $color="#4a5053">Lisani</AccountText>
                  <Avatar><Person /></Avatar>
                  <Space $w={30} />
                  <AccountText $size={17.6} $color="#4a5053">915</AccountText>
                  <Rewards><Trophy /><RedDot /></Rewards>
                  <Burger />
                </Account>
              </Header>
              <PreviousEdge />
              <Bubble $w={305} $top={29}><Text $size={20} $color="#fff">question after towering castle</Text></Bubble>
              <Status><Check /><Text $size={17.5}>Generating answers for you…</Text></Status>
              <Answer>
                <Prose>
                  <p>Sure, here’s the next question after the player chooses to go to the towering castle:</p>
                  <Numbered start={3}>
                    <li>
                      “You are now in the towering castle. You see a grand throne room, a mysterious library, and a hidden<br />
                      dungeon. Where would you like to go?”
                      <Choices>
                        <li>“The grand throne room”</li>
                        <li>“The mysterious library”</li>
                        <li>“The hidden dungeon”</li>
                      </Choices>
                    </li>
                  </Numbered>
                  <p>
                    Remember, these are just examples. You can modify these questions to suit your game’s theme and<br />
                    storyline. Happy game designing! <InlineEmoji><Smile /></InlineEmoji>
                  </p>
                </Prose>
                <AnswerFoot>
                  <Actions>
                    <Slot $w={40}><ThumbUp /></Slot>
                    <Slot $w={40}><ThumbDown /></Slot>
                    <ActionSep />
                    <Slot $w={40}><Copy /></Slot>
                    <Slot $w={40}><Download /></Slot>
                    <Slot $w={40}><Share /></Slot>
                  </Actions>
                  <Counter><Text $size={17.5} $weight={600} $color="#111">11 of 30</Text></Counter>
                </AnswerFoot>
              </Answer>
              <Bubble $w={307} $top={30}><Text $size={20} $color="#fff">question after bustling market</Text></Bubble>
              <Composer>
                <NewTopic><TopicIcon /><Text $size={20} $color="#fff">New topic</Text></NewTopic>
                <InputBox>
                  <InputLine $h={29} $gap={6}>
                    <Text $size={20} $color="#94999b" $ls={-0.05}>q after <Text $size={20} $color="#c6cdcf">stock</Text></Text>
                    <TabKey>Tab</TabKey>
                    <MicButton><Mic /></MicButton>
                  </InputLine>
                  <InputLine $h={22} $gap={21}>
                    <Lens />
                    <Push><Text $size={17.6} $color="#a7b1b7">8/4000</Text></Push>
                    <Send />
                  </InputLine>
                </InputBox>
              </Composer>
            </Main>
            <Panel>
              <PanelTabs>
                <PanelTab $active><Text $size={17.6} $weight={600} $color="#111">Recent activity</Text></PanelTab>
                <PanelTab><Text $size={17.6} $weight={600} $color="#111">Plugins</Text></PanelTab>
              </PanelTabs>
              <ActivityCard>
                <ActivityList>
                  {activity.map(([title, when], i) => (
                    <ActivityRow key={title} $last={i === activity.length - 1}>
                      <Text $size={17.5} $color="#23282b">{title}</Text>
                      <Text $size={12.6} $color="#454b4f">{when}</Text>
                    </ActivityRow>
                  ))}
                </ActivityList>
                <SeeAll><Text $size={17.6} $color="#00687f">See all recent chats</Text></SeeAll>
              </ActivityCard>
            </Panel>
            <Feedback><Speech /><Text $size={16.4} $color="#00687f">Feedback</Text></Feedback>
          </Page>
          <ScrollTrack><Arrow $up /><Thumb /><Arrow /></ScrollTrack>
        </Frame>
        <Side>
          {sideApps.map((Icon, i) => <SideItem key={i}><Icon /></SideItem>)}
          <SideItem><Spotify s={21} mark="#fff" /></SideItem>
          <SideRule $m="16px 0 13px" />
          <SideItem><Plus s={15} /></SideItem>
          <SideRule $m="auto 0 3px" />
          <SideItem><PanelIcon /></SideItem>
          <SideItem><OpenOut /></SideItem>
          <SideItem><Gear /></SideItem>
        </Side>
      </Body>

      <Taskbar>
        <Slot $w={60}><Windows /></Slot>
        <SearchBox>
          <TaskGlass />
          <SearchHint $ui $size={17.9} $color="#3a3a3a">Type here to search</SearchHint>
          <Push><Desert /></Push>
        </SearchBox>
        <AppTile $w={60}><TaskView /></AppTile>
        <Space $w={4} />
        <AppTile $w={61} $open $running><Edge /></AppTile>
        <AppTile $w={61}><Folder /></AppTile>
        <AppTile $w={63}><Mail /></AppTile>
        <AppTile $w={61}><Office letter="X" c={["#21a366", "#33c481", "#107c41", "#185c37", "#117a41"]} /></AppTile>
        <AppTile $w={62}><Office letter="W" c={["#2b7cd3", "#41a5ee", "#2b7cd3", "#103f91", "#1a56b8"]} /></AppTile>
        <AppTile $w={62}><PowerPoint /></AppTile>
        <Space $w={6} />
        <AppTile $w={51} $running><Chrome /></AppTile>
        <AppTile $w={73}><Brave /></AppTile>
        <AppTile $w={51} $running><Spotify s={29} mark="#111" /></AppTile>
        <Push />
        <Haze />
        <Space $w={13} />
        <Text $ui $size={17} $ls={-0.4}>19°C</Text>
        <Space $w={12} />
        <Text $ui $size={17}>Haze</Text>
        <Space $w={20} />
        <Slot $w={34}><Chevron /></Slot>
        <Slot $w={29}><Battery /></Slot>
        <Slot $w={32}><Cam /></Slot>
        <Slot $w={29}><Wifi /></Slot>
        <Slot $w={28}><Volume /></Slot>
        <Slot $w={45}><Text $ui $size={15} $ls={-0.3}>ENG</Text></Slot>
        <Clock>
          <ClockLine $ui $size={15} $ls={-0.2}>03:18 PM</ClockLine>
          <ClockLine $ui $size={15} $ls={-0.2}>13-01-2024</ClockLine>
        </Clock>
        <ActionCenter><Notifications /></ActionCenter>
        <PeekEdge />
        <Space $w={5} />
      </Taskbar>
    </Screen>
  );
}
